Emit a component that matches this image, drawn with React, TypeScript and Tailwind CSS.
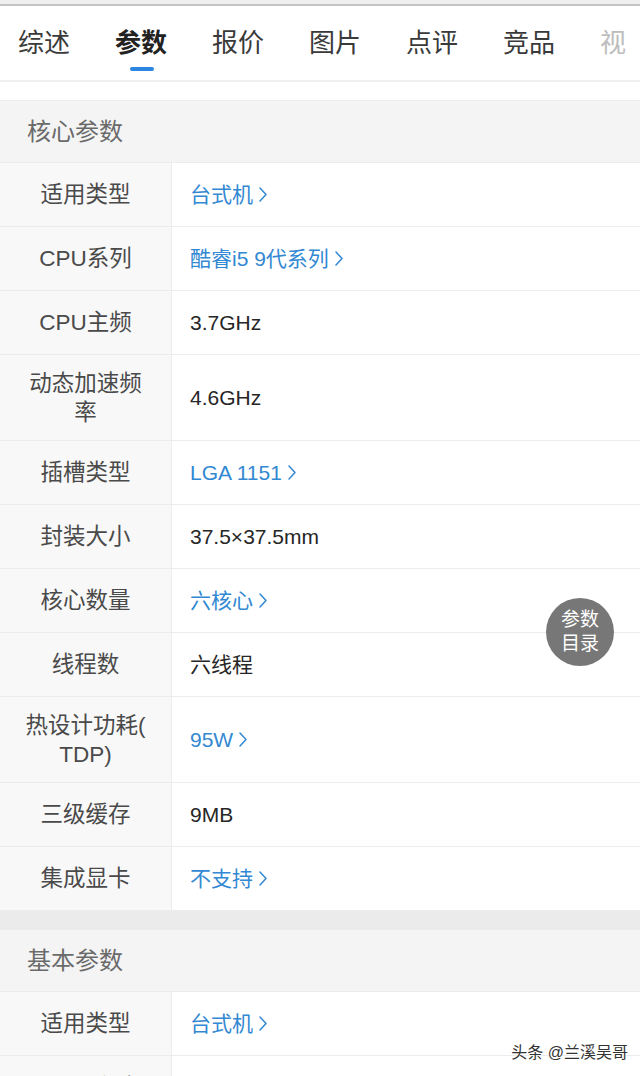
import React from "react";

type Row = { label: React.ReactNode; value: string; link?: boolean; tall?: boolean };

const core: Row[] = [
  { label: "适用类型", value: "台式机", link: true },
  { label: "CPU系列", value: "酷睿i5 9代系列", link: true },
  { label: "CPU主频", value: "3.7GHz" },
  { label: <>动态加速频<br />率</>, value: "4.6GHz", tall: true },
  { label: "插槽类型", value: "LGA 1151", link: true },
  { label: "封装大小", value: "37.5×37.5mm" },
  { label: "核心数量", value: "六核心", link: true },
  { label: "线程数", value: "六线程" },
  { label: <>热设计功耗(<br />TDP)</>, value: "95W", link: true, tall: true },
  { label: "三级缓存", value: "9MB" },
  { label: "集成显卡", value: "不支持", link: true },
];

const basic: Row[] = [
  { label: "适用类型", value: "台式机", link: true },
  { label: "CPU系列", value: "酷睿i5 9代系列", link: true },
];

const font = { fontFamily: '"Liberation Sans", "Noto Sans CJK SC", sans-serif' };

function Chevron() {
  return (
    <svg width="10" height="17" viewBox="0 0 10 17" className="ml-[5px]" fill="none">
      <path d="M2 2 L8 8.5 L2 15" stroke="#3288d2" strokeWidth="1.5" strokeLinecap="round" strokeLinejoin="round" />
    </svg>
  );
}

function ParamRow({ r }: { r: Row }) {
  return (
    <div className={`flex border-b border-[#ececec] ${r.tall ? "h-[86px]" : "h-[64px]"}`}>
      <div className="w-[172px] shrink-0 bg-[#f8f8f8] border-r border-[#ececec] flex items-center justify-center text-center text-[22.5px] leading-[29px] text-[#4a4a4a]">
        <span>{r.label}</span>
      </div>
      <div className="flex-1 flex items-center pl-[18px] bg-white">
        {r.link ? (
          <span className="flex items-center text-[21px] text-[#3288d2]">
            {r.value}
            <Chevron />
          </span>
        ) : (
          <span className="text-[21px] text-[#262626]">{r.value}</span>
        )}
      </div>
    </div>
  );
}

function Section({ title, rows }: { title: string; rows: Row[] }) {
  return (
    <div className="shadow-[0_2px_3px_rgba(0,0,0,0.08)]">
      <div className="h-[63px] bg-[#f4f4f4] border-t border-[#ececec] border-b border-[#e6e6e6] flex items-center pl-[27px] text-[24px] text-[#6a6a6a]">
        {title}
      </div>
      {rows.map((r, i) => (
        <ParamRow key={i} r={r} />
      ))}
    </div>
  );
}

export default function App() {
  const tabs = ["综述", "参数", "报价", "图片", "点评", "竞品", "视"];
  return (
    <div className="relative w-[640px] h-[1076px] overflow-hidden bg-white" style={font}>
      <div className="h-[6px] bg-[#efefef] border-b-2 border-[#c4c4c4]" />
      <div className="h-[76px] flex items-start pl-[18px] gap-[45px] border-b-2 border-[#efefef] whitespace-nowrap">
        {tabs.map((t, i) => (
          <div key={t} className="relative pt-[19px]">
            <span
              className={`text-[26px] leading-[36px] ${
                i === 1 ? "font-bold text-[#222]" : i === 6 ? "text-[#bdbdbd]" : "text-[#3a3a3a]"
              }`}
            >
              {t}
            </span>
            {i === 1 && (
              <div className="absolute left-[15px] top-[61px] w-[24px] h-[4px] rounded-full bg-[#2a86e0]" />
            )}
          </div>
        ))}
      </div>
      <div className="h-[18px] bg-white" />
      <Section title="核心参数" rows={core} />
      <div className="h-[18px] bg-[#ebebeb]" />
      <Section title="基本参数" rows={basic} />

      <div className="absolute left-[546px] top-[598px] w-[68px] h-[68px] rounded-full bg-[#777777] flex flex-col items-center justify-center text-white text-[19px] leading-[24px]">
        <span>参数</span>
        <span>目录</span>
      </div>

      <div
        className="absolute right-[12px] top-[1041px] text-[16px] text-[#333]"
        style={{ textShadow: "0 0 2px #fff, 0 0 2px #fff, 0 0 2px #fff" }}
      >
        头条 @兰溪吴哥
      </div>
    </div>
  );
}
